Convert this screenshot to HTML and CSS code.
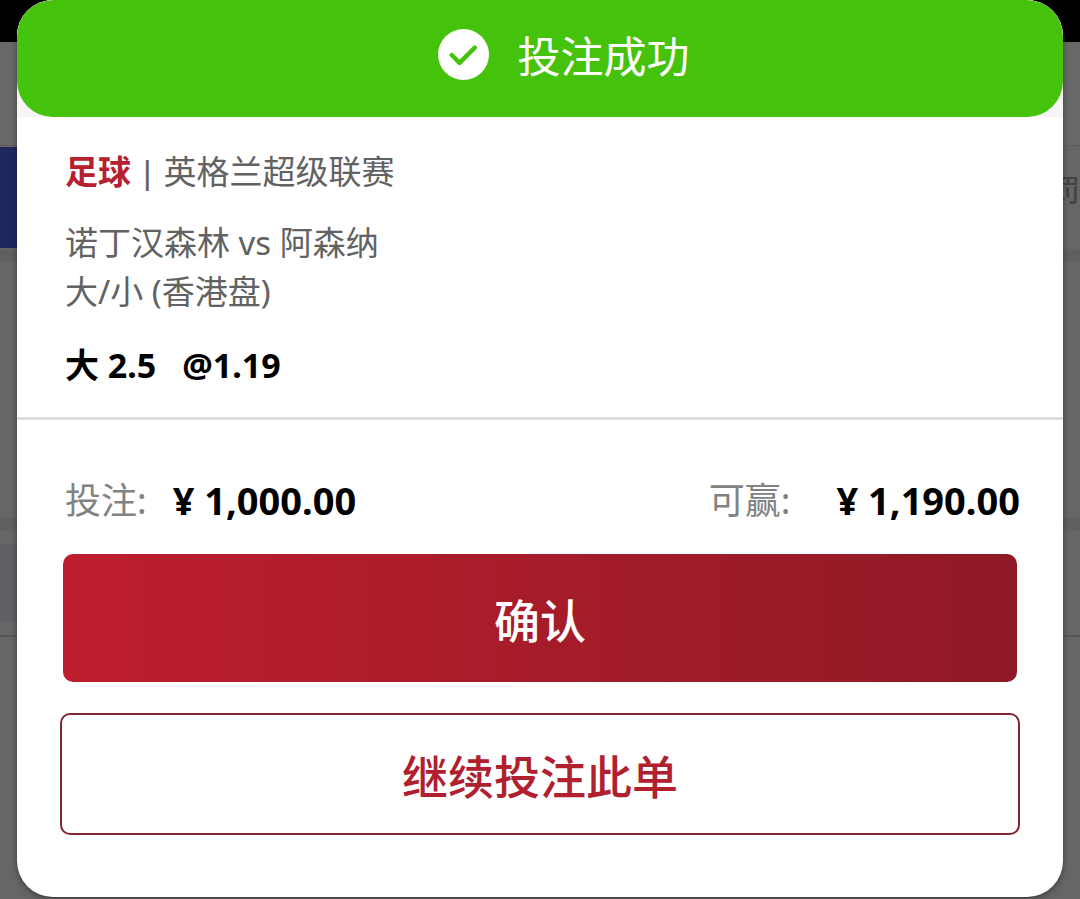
FILE: index.html
```
<!DOCTYPE html>
<html lang="zh-CN">
<head>
  <meta charset="UTF-8">
  <meta name="viewport" content="width=device-width, initial-scale=1.0">
  <title>投注成功</title>
  <link rel="stylesheet" href="styles.css">
</head>
<body>
  <div class="page">
    <div class="status-bar"></div>
    <div class="page-header"></div>
    <div class="tab-row">
      <div class="tab-active"></div>
      <span class="tab-text">罚</span>
    </div>
    <div class="strip"></div>
    <div class="page-block"></div>
    <div class="strip"></div>
    <div class="odds-row">
      <div class="odds-cell"></div>
    </div>
    <div class="page-rest"></div>
  </div>

  <div class="overlay">
    <div class="slip" role="dialog" aria-labelledby="slipTitle">
      <div class="banner-holder">
        <div class="banner">
          <svg class="banner-icon" viewBox="0 0 52 52" aria-hidden="true">
            <circle cx="26" cy="26" r="26" fill="#fff"/>
            <path d="M14 26.500 L22 34.500 L37.500 19" fill="none" stroke="#45c20b" stroke-width="4.500" stroke-linecap="round" stroke-linejoin="round"/>
          </svg>
          <h1 id="slipTitle">投注成功</h1>
        </div>
      </div>

      <div class="bet-info">
        <p class="league"><span class="sport">足球</span><span class="bar">|</span>英格兰超级联赛</p>
        <p>诺丁汉森林 vs 阿森纳</p>
        <p>大/小 (香港盘)</p>
        <p class="pick"><span>大 2.5</span><span>@1.19</span></p>
      </div>

      <div class="bet-actions">
        <div class="amounts">
          <p class="stake"><span class="label">投注:</span><strong>¥ 1,000.00</strong></p>
          <p class="win"><span class="label">可赢:</span><strong>¥ 1,190.00</strong></p>
        </div>
        <button type="button" class="btn-confirm">确认</button>
        <button type="button" class="btn-again">继续投注此单</button>
      </div>
    </div>
  </div>
</body>
</html>
```

FILE: styles.css
```
* {
    margin: 0;
    padding: 0;
    box-sizing: border-box;
}

body {
    background: #666666;
    color: #626262;
    font-family: 'Noto Sans', 'Noto Sans CJK SC', sans-serif;
    font-size: 33px;
    line-height: 49px;
    min-height: 100vh;
    position: relative;
}

/* dimmed page behind the slip */
.page {
    display: flex;
    flex-direction: column;
    min-height: 100vh;
    overflow: hidden;
}

.status-bar {
    height: 42px;
    background: #000;
}

.page-header {
    height: 104px;
    background: #686868;
    border-bottom: 1px solid #5e5e5e;
}

.tab-row {
    height: 103px;
    display: flex;
    justify-content: space-between;
    align-items: center;
}

.tab-active {
    width: 120px;
    height: 101px;
    background: #1f285f;
}

.tab-text {
    font-size: 30px;
    font-weight: 500;
    color: #444;
    padding-bottom: 16px;
}

.strip {
    height: 13px;
    background: #606060;
}

.page-block {
    height: 256px;
}

.odds-row {
    height: 106px;
    padding: 13px 0;
    border-bottom: 2px solid #575757;
}

.odds-cell {
    width: 50%;
    height: 78px;
    background: #5f6164;
}

.page-rest {
    flex: 1;
}

/* bet slip */
.overlay {
    position: absolute;
    top: 0;
    left: 0;
    width: 100%;
    padding: 0 17px;
}

.slip {
    background: #fff;
    border-radius: 36px;
    box-shadow: 0 2px 6px rgba(0, 0, 0, 0.4);
    overflow: hidden;
}

.banner-holder {
    background: #f5f5f5;
}

.banner {
    display: flex;
    justify-content: center;
    align-items: center;
    gap: 29px;
    padding: 26px 0 34px 47px;
    background: #45c20b;
    border-radius: 36px;
}

.banner-icon {
    width: 51px;
    height: 51px;
}

.banner h1 {
    color: #fff;
    font-family: 'Noto Sans CJK SC', sans-serif;
    font-size: 43px;
    font-weight: 400;
    line-height: 57px;
}

.bet-info {
    padding: 30px 48px 27px;
    border-bottom: 3px solid #dedede;
}

.league {
    margin-bottom: 21px;
}

.sport {
    color: #b6202f;
    font-weight: 700;
}

.bar {
    margin: 0 12px;
    font-family: 'Liberation Sans', sans-serif;
}

.pick {
    display: flex;
    gap: 26px;
    margin-top: 25px;
    color: #000;
    font-size: 34px;
    font-weight: 700;
}

.bet-actions {
    display: flex;
    flex-direction: column;
    padding: 56px 43px 62px;
}

.amounts {
    display: flex;
    justify-content: space-between;
    padding: 0 0 0 5px;
    margin-bottom: 29px;
    font-size: 36px;
}

.amounts p {
    display: flex;
}

.stake {
    gap: 26px;
}

.win {
    gap: 46px;
}

.label {
    color: #828282;
}

.amounts strong {
    color: #000;
    font-size: 38px;
    font-weight: 700;
}

button {
    font-family: 'Noto Sans CJK SC', sans-serif;
    font-size: 46px;
    font-weight: 500;
    line-height: 66px;
    border-radius: 10px;
    cursor: pointer;
}

.btn-confirm {
    margin: 0 3px 31px;
    padding: 31px;
    border: none;
    background: linear-gradient(to right, #be1e2d, #8f1926);
    color: #fff;
}

.btn-again {
    padding: 26px;
    border: 2px solid #7f2632;
    background: #fff;
    color: #b0202e;
}
```
